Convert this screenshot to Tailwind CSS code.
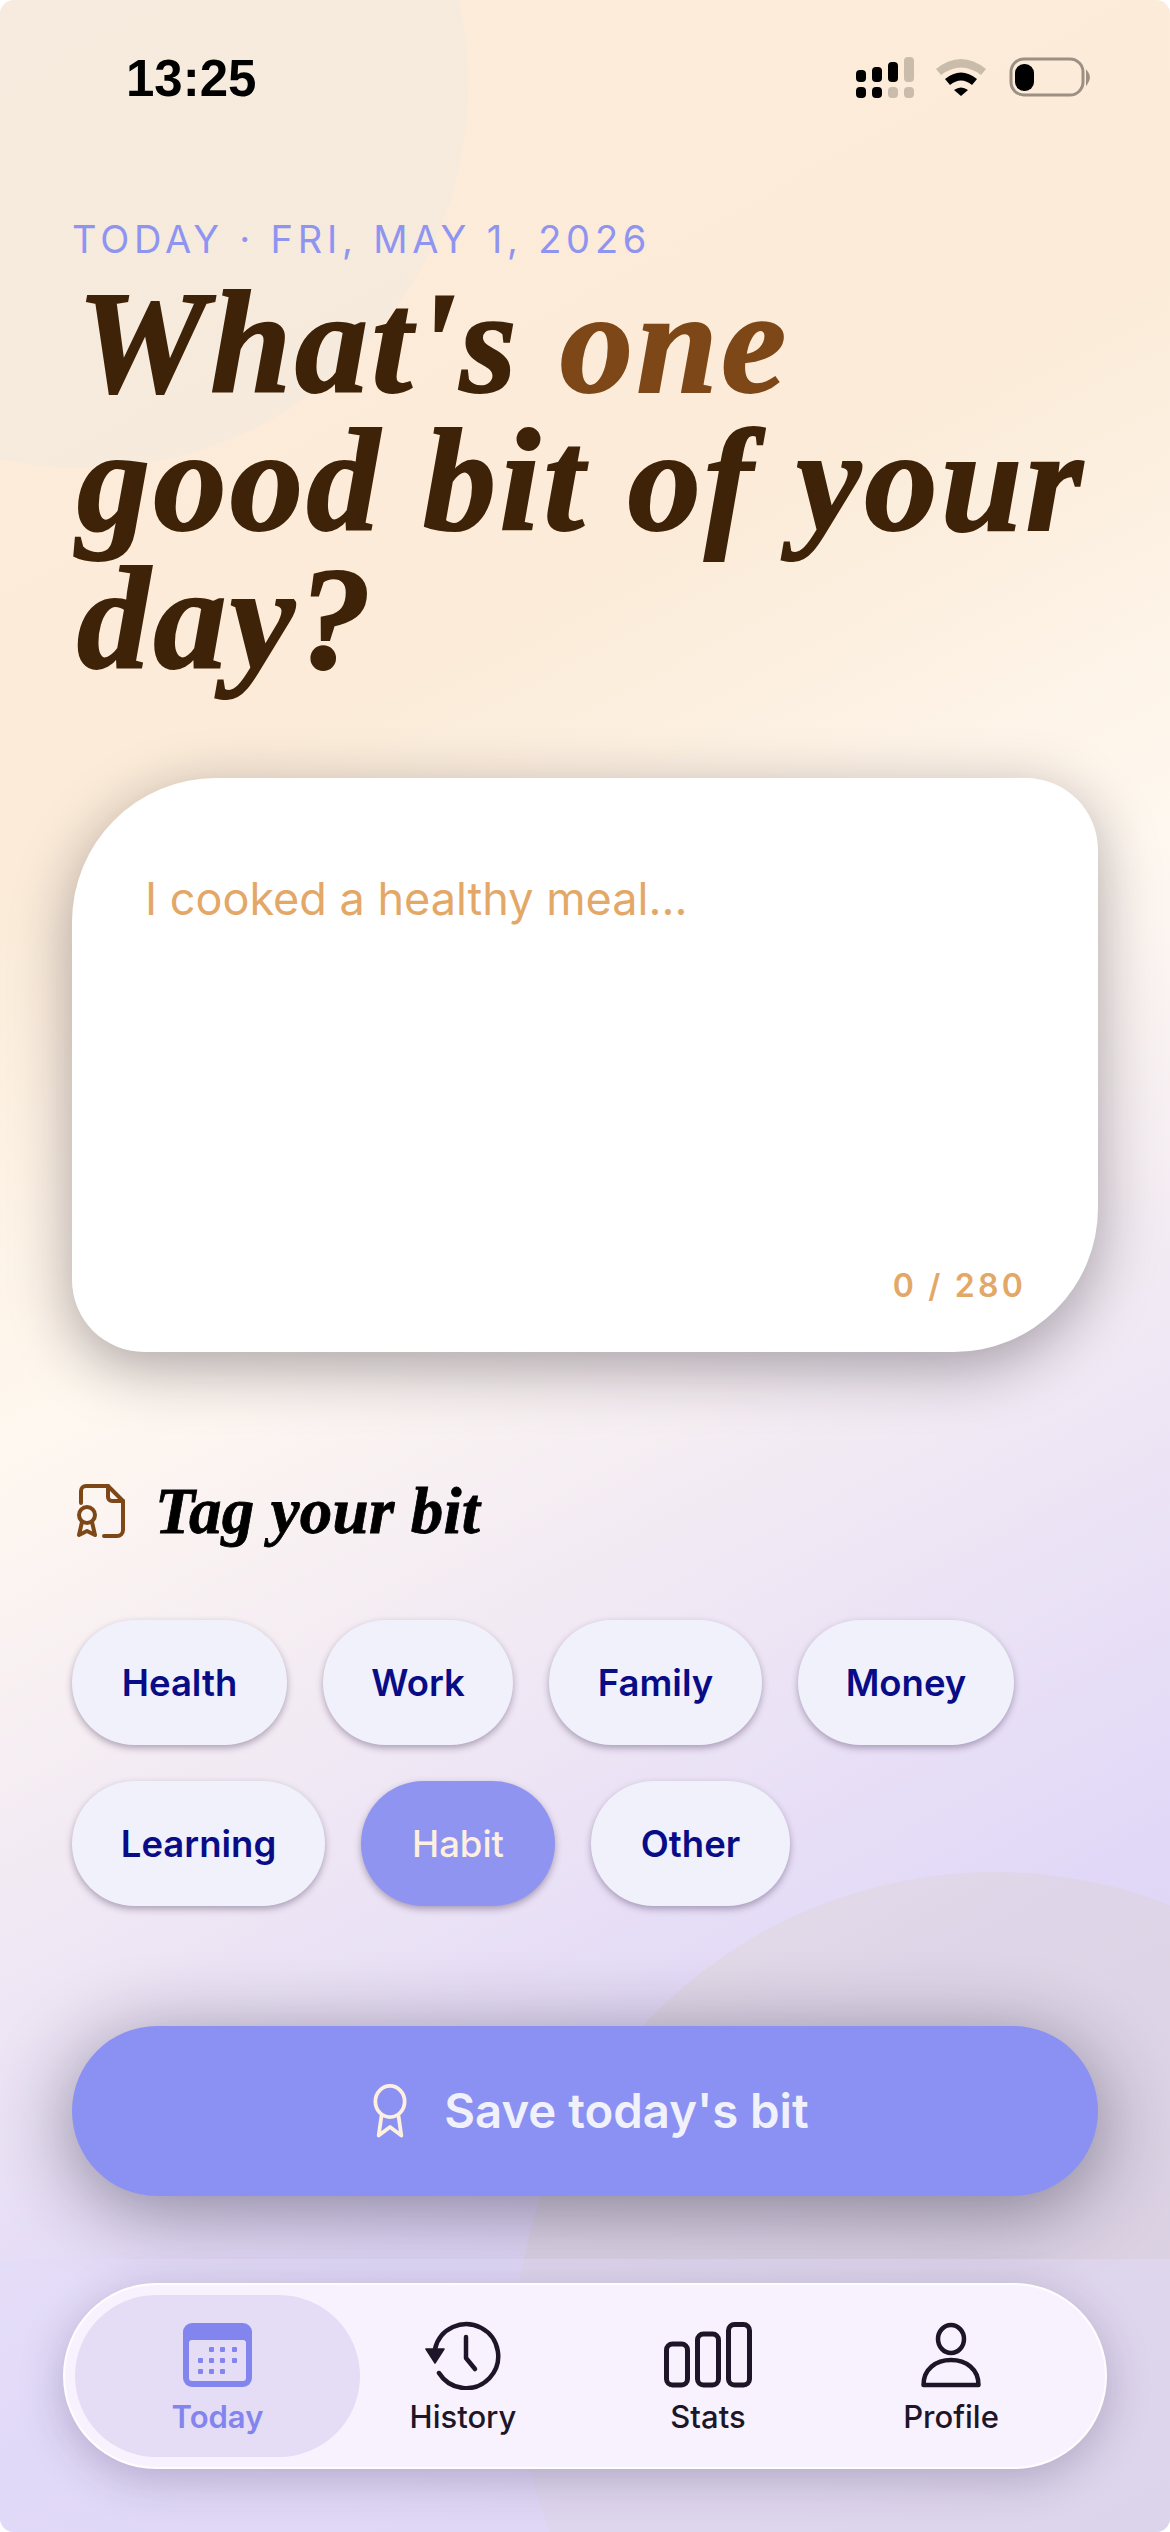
<!DOCTYPE html>
<html lang="en">
<head>
    <meta charset="UTF-8">
    <title>Today</title>
    <script src="https://cdn.jsdelivr.net/npm/@tailwindcss/browser@4"></script>
</head>
<body class="m-0 bg-white">
<div class="relative w-[1170px] h-[2532px] overflow-hidden rounded-[14px] font-['Inter',sans-serif] bg-[linear-gradient(152deg,#fcecd9_0%,#fbebd8_28%,#fff8f0_46%,#e1d8f8_78%,#d8cfec_100%)]">
    <!-- background blobs -->
    <div class="absolute left-[-300px] top-[-300px] w-[768px] h-[768px] rounded-full bg-[#e8e4f4]/20"></div>
    <div class="absolute left-[515px] top-[1872px] w-[960px] h-[960px] rounded-full bg-[#d8cdb0]/20"></div>

    <div class="relative flex flex-col h-full">
        <!-- status bar -->
        <div class="flex items-center justify-between h-[156px] pl-[126px] pr-[76px]">
            <span class="text-[51px] font-semibold text-black leading-none font-['Liberation_Sans',sans-serif]">13:25</span>
            <svg width="238" height="44" viewBox="856 56 238 44" fill="none">
                <rect x="856" y="70" width="10" height="12" rx="4" fill="#000"/>
                <rect x="872" y="67" width="10" height="15" rx="4" fill="#000"/>
                <rect x="888" y="62" width="10" height="20" rx="4" fill="#000"/>
                <rect x="904" y="57" width="10" height="25" rx="4" fill="#c9bcab"/>
                <rect x="856" y="87" width="10" height="11" rx="4" fill="#000"/>
                <rect x="872" y="87" width="10" height="11" rx="4" fill="#000"/>
                <rect x="888" y="87" width="10" height="11" rx="4" fill="#c9bcab"/>
                <rect x="904" y="87" width="10" height="11" rx="4" fill="#c9bcab"/>
                <path d="M936 69 Q961 49 986 69 L981 75 Q961 60 941 75 Z" fill="#c9bcab"/>
                <path d="M945 79 Q961 66 977 79 L972 85 Q961 76 950 85 Z" fill="#000"/>
                <path d="M954 90 Q961 85 968 90 L961 96 Z" fill="#000"/>
                <rect x="1011" y="59" width="72" height="36" rx="13" stroke="#9c9084" stroke-width="3"/>
                <rect x="1015" y="64" width="19" height="27" rx="9" fill="#000"/>
                <path d="M1087 72 Q1091 77 1087 83 Z" stroke="#9c9084" stroke-width="2" fill="#9c9084"/>
            </svg>
        </div>

        <!-- heading -->
        <div class="px-[72px] mt-[62px]">
            <p class="text-[38px] leading-[42px] tracking-[4.8px] text-[#8f94f0] font-normal">TODAY · FRI, MAY 1, 2026</p>
            <h1 class="mt-[14px] pl-[5px] text-[146px] leading-[138px] tracking-[3.5px] whitespace-nowrap font-bold italic text-[#3e2308] [-webkit-text-stroke:2px_currentColor] font-['Liberation_Serif',serif]">What's <span class="text-[#7d4717]">one</span><br>good bit of your<br>day?</h1>
        </div>

        <!-- entry card -->
        <div class="mx-[72px] mt-[90px] h-[574px] shrink-0 bg-white rounded-tl-[144px] rounded-br-[144px] rounded-tr-[72px] rounded-bl-[72px] shadow-[0_16px_60px_rgba(25,18,30,0.36)] flex flex-col justify-between pl-[73px] pr-[72px] pt-[94px] pb-[48px]">
            <p class="text-[45px] leading-[54px] text-[#e3a868] font-normal">I cooked a healthy meal...</p>
            <p class="text-right text-[32px] leading-[36px] tracking-[0.1em] font-semibold text-[#e3a868]">0 / 280</p>
        </div>

        <!-- tags -->
        <div class="mx-[72px] mt-[129px] flex items-center gap-[30px] h-[60px] pl-[5px]">
            <svg width="48" height="56" viewBox="0 0 48 56" fill="none" stroke="#7d4717" stroke-width="4" stroke-linecap="round" stroke-linejoin="round">
                <path d="M4 20V8a5 5 0 0 1 5-5h22l15 15v29a6 6 0 0 1-6 6H27"/>
                <path d="M31 3v11a4 4 0 0 0 4 4h11"/>
                <circle cx="10" cy="32" r="8"/>
                <path d="M5 39 2 52l8-4 8 4-3-13"/>
            </svg>
            <span class="text-[65px] leading-none tracking-[0.2px] font-bold italic text-black [-webkit-text-stroke:0.8px_currentColor] font-['Liberation_Serif',serif]">Tag your bit</span>
        </div>

        <div class="mx-[72px] mt-[79px] flex flex-wrap gap-[36px] text-[36.5px] font-semibold">
            <span class="w-[215px] h-[125px] pt-[2px] flex items-center justify-center rounded-full bg-[#f1f1fc] text-[#080d87] shadow-[0_3px_7px_rgba(60,40,80,0.38)]">Health</span>
            <span class="w-[190px] h-[125px] pt-[2px] flex items-center justify-center rounded-full bg-[#f1f1fc] text-[#080d87] shadow-[0_3px_7px_rgba(60,40,80,0.38)]">Work</span>
            <span class="w-[213px] h-[125px] pt-[2px] flex items-center justify-center rounded-full bg-[#f1f1fc] text-[#080d87] shadow-[0_3px_7px_rgba(60,40,80,0.38)]">Family</span>
            <span class="w-[216px] h-[125px] pt-[2px] flex items-center justify-center rounded-full bg-[#f1f1fc] text-[#080d87] shadow-[0_3px_7px_rgba(60,40,80,0.38)]">Money</span>
            <span class="w-[253px] h-[125px] pt-[2px] flex items-center justify-center rounded-full bg-[#f1f1fc] text-[#080d87] shadow-[0_3px_7px_rgba(60,40,80,0.38)]">Learning</span>
            <span class="w-[194px] h-[125px] pt-[2px] flex items-center justify-center rounded-full bg-[#8f94f0] text-[#fdf0e0] font-medium shadow-[0_3px_7px_rgba(60,40,80,0.38)]">Habit</span>
            <span class="w-[199px] h-[125px] pt-[2px] flex items-center justify-center rounded-full bg-[#f1f1fc] text-[#080d87] shadow-[0_3px_7px_rgba(60,40,80,0.38)]">Other</span>
        </div>

        <!-- save button -->
        <button class="mx-[72px] mt-[120px] h-[170px] shrink-0 pl-[12px] rounded-full bg-[#8a91f2] flex items-center justify-center gap-[37px] text-[47.3px] font-semibold text-[#f1f1fc] shadow-[0_14px_80px_rgba(25,20,40,0.46)]">
            <svg width="34" height="56" viewBox="0 0 36 58" fill="none" stroke="#fdf0e0" stroke-width="4" stroke-linecap="round" stroke-linejoin="round">
                <ellipse cx="18" cy="19" rx="15.500" ry="16.500"/>
                <path d="M9 34 6 55l12-9 12 9-3-21"/>
            </svg>
            Save today's bit
        </button>

        <!-- bottom nav -->
        <div class="mt-[63px] flex-1 pt-[24px] px-[63px] bg-[#e3dbf8]/45">
            <nav class="h-[186px] rounded-[93px] bg-[#f8f2fe] border-2 border-white/90 shadow-[0_10px_44px_rgba(50,35,80,0.26)] flex items-center px-[10px] text-[#1e1628] text-[31px] font-medium leading-[38px]">
                <a class="w-[285px] h-[162px] pt-[4px] rounded-[81px] bg-[#e5dcf5] flex flex-col items-center justify-center gap-[8px] text-[#8385ee] font-semibold">
                    <span class="h-[70px] flex items-center">
                        <svg width="69" height="64" viewBox="0 0 69 64">
                            <rect x="0" y="0" width="69" height="64" rx="9" fill="#8385ee"/>
                            <rect x="6" y="17" width="57" height="41" rx="3" fill="#e5dcf5"/>
                            <g fill="#8385ee">
                                <rect x="26" y="24" width="5" height="5" rx="1"/><rect x="37" y="24" width="5" height="5" rx="1"/><rect x="49" y="24" width="5" height="5" rx="1"/>
                                <rect x="15" y="35" width="5" height="5" rx="1"/><rect x="26" y="35" width="5" height="5" rx="1"/><rect x="37" y="35" width="5" height="5" rx="1"/><rect x="49" y="35" width="5" height="5" rx="1"/>
                                <rect x="15" y="46" width="5" height="5" rx="1"/><rect x="26" y="46" width="5" height="5" rx="1"/><rect x="37" y="46" width="5" height="5" rx="1"/>
                            </g>
                        </svg>
                    </span>
                    Today
                </a>
                <a class="w-[206px] pt-[4px] flex flex-col items-center gap-[8px]">
                    <span class="h-[70px] flex items-center">
                        <svg width="76" height="70" viewBox="0 0 76 70" fill="none" stroke="#1e1628" stroke-width="4.500" stroke-linecap="round" stroke-linejoin="round">
                            <path d="M10 29A32 32 0 1 1 14 53"/>
                            <path d="M41 17v21l9 11"/>
                            <path d="M1 29h18l-9 14Z" fill="#1e1628" stroke-width="1.500"/>
                        </svg>
                    </span>
                    History
                </a>
                <a class="w-[284px] pt-[4px] flex flex-col items-center gap-[8px]">
                    <span class="h-[70px] flex items-center">
                        <svg width="88" height="66" viewBox="0 0 88 66" fill="none" stroke="#1e1628" stroke-width="5">
                            <rect x="2.500" y="22" width="21" height="41" rx="6"/>
                            <rect x="33.500" y="12" width="21" height="51" rx="6"/>
                            <rect x="64.500" y="2.500" width="21" height="60.500" rx="6"/>
                        </svg>
                    </span>
                    Stats
                </a>
                <a class="w-[202px] pt-[4px] flex flex-col items-center gap-[8px]">
                    <span class="h-[70px] flex items-center">
                        <svg width="62" height="66" viewBox="0 0 62 66" fill="none" stroke="#1e1628" stroke-width="4.500" stroke-linejoin="round">
                            <ellipse cx="31" cy="17" rx="13" ry="14"/>
                            <path d="M3.500 63C3.500 47 16 38 31 38s27.500 9 27.500 25Z"/>
                        </svg>
                    </span>
                    Profile
                </a>
            </nav>
        </div>
    </div>
</div>
</body>
</html>
